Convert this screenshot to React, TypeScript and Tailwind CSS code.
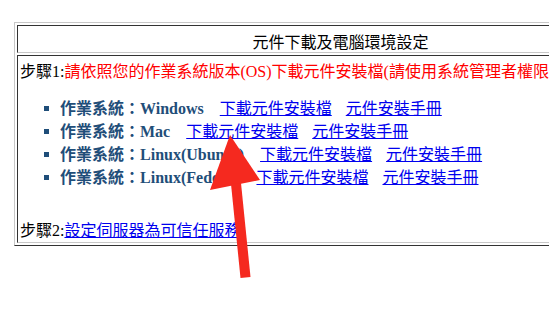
const systems = [
  { name: "Windows" },
  { name: "Mac" },
  { name: "Linux(Ubuntu)" },
  { name: "Linux(Fedora)" },
];

export default function App() {
  return (
    <div
      className="relative h-[318px] w-[549px] overflow-hidden bg-white text-[16px] text-black"
      style={{ fontFamily: '"Liberation Serif", "Noto Sans CJK TC", serif' }}
    >
      <div className="pl-[14px] pt-[22px]">
        {/* outer table */}
        <div className="w-[653px] border border-t-[#c8c8c8] border-l-[#c8c8c8] border-b-[#333333] border-r-[#333333] p-[2px]">
          {/* title cell */}
          <div className="h-[28px] border border-t-[#333333] border-l-[#333333] border-b-[#c8c8c8] border-r-[#c8c8c8] pt-[7px] text-center leading-[20px]">
            元件下載及電腦環境設定
          </div>

          {/* content cell */}
          <div className="mt-[2px] h-[188px] border border-t-[#333333] border-l-[#333333] border-b-[#c8c8c8] border-r-[#c8c8c8] pl-[2px] pt-[6px]">
            <div className="whitespace-nowrap leading-[20px]">
              步驟1:
              <span className="text-[#ff0000]">
                請依照您的作業系統版本(OS)下載元件安裝檔(請使用系統管理者權限
              </span>
            </div>

            <ul className="mt-[15px]">
              {systems.map((s) => (
                <li
                  key={s.name}
                  className="flex h-[23px] items-center whitespace-nowrap leading-[23px]"
                >
                  <span className="ml-[24px] mr-[11px] h-[5px] w-[5px] bg-[#1f4e79]" />
                  <span className="font-bold text-[#1f4e79]">作業系統：{s.name}</span>
                  <a href="#" className="ml-[16px] text-[#0000ee] underline">
                    下載元件安裝檔
                  </a>
                  <a href="#" className="ml-[14px] text-[#0000ee] underline">
                    元件安裝手冊
                  </a>
                </li>
              ))}
            </ul>

            <div className="mt-[32px] whitespace-nowrap leading-[20px]">
              步驟2:
              <a href="#" className="text-[#0000ee] underline">
                設定伺服器為可信任服務
              </a>
            </div>
          </div>
        </div>
      </div>

      {/* red annotation arrow */}
      <svg
        className="pointer-events-none absolute left-0 top-0"
        width="549"
        height="318"
        viewBox="0 0 549 318"
      >
        <polygon points="230,135 210,190 260,180" fill="#f5291f" />
        <polygon points="231,184 241,183 250.5,277 240.5,278" fill="#f5291f" />
      </svg>
    </div>
  );
}
